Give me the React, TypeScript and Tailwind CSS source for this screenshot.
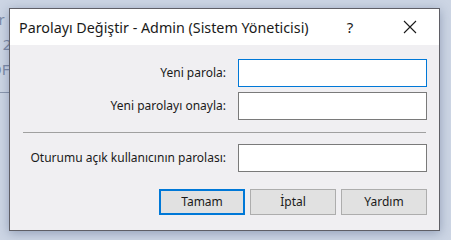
const ui = { fontFamily: '"Segoe UI", "Noto Sans", "Open Sans", sans-serif' };

function Field({ label, focused }: { label: string; focused?: boolean }) {
  return (
    <div className="flex items-center justify-end gap-[12px]">
      <span className="text-[12px] text-[#1a1a1a]">{label}</span>
      <div
        className={
          "h-[28px] w-[189px] bg-white border " +
          (focused ? "border-[#0078d7]" : "border-[#7a7a7a]")
        }
      />
    </div>
  );
}

function Btn({ label, primary }: { label: string; primary?: boolean }) {
  return (
    <button
      className={
        "h-[26px] w-[86px] bg-[#e1e1e1] text-[12px] text-[#1a1a1a] " +
        (primary ? "border-2 border-[#0078d7]" : "border border-[#adadad]")
      }
    >
      {label}
    </button>
  );
}

export default function App() {
  return (
    <div className="w-[451px] h-[240px] overflow-hidden bg-[#ccd5e4] flex" style={ui}>
      <div className="w-[9px] shrink-0 overflow-hidden text-[#7c8aa6] text-[15px] leading-none">
        <div className="-ml-[10px] pt-[12px] whitespace-nowrap">ar</div>
        <div className="-ml-[6px] pt-[10px] whitespace-nowrap">- 2</div>
        <div className="-ml-[10px] pt-[10px] whitespace-nowrap">OF</div>
        <div className="mt-[15px] border-t border-[#8a97ad]" />
      </div>
      <div className="mt-[8px] w-[431px] h-[223px] shrink-0 flex flex-col border border-[#5f5f66] bg-[#f0eff2] shadow-[0_2px_10px_rgba(40,60,100,0.35)]">
        <div className="h-[36px] bg-white flex items-center pl-[9px]">
          <span className="text-[14.3px] text-[#1a1a1a] flex-1 pt-[1px]">
            Parolayı Değiştir - Admin (Sistem Yöneticisi)
          </span>
          <span className="w-[58px] text-center text-[15px] text-[#1a1a1a] pr-[4px]">?</span>
          <span className="w-[58px] flex justify-center">
            <svg width="14" height="14" viewBox="0 0 14 14" stroke="#1a1a1a" strokeWidth="1.1">
              <path d="M1 1L13 13M13 1L1 13" />
            </svg>
          </span>
        </div>
        <div className="flex flex-col pt-[14px] pl-[13px] pr-[12px]">
          <Field label="Yeni parola:" focused />
          <div className="h-[5px]" />
          <Field label="Yeni parolayı onayla:" />
          <div className="mt-[12px] mr-px border-t border-[#a0a0a0]" />
          <div className="h-[11px]" />
          <Field label="Oturumu açık kullanıcının parolası:" />
          <div className="flex justify-end gap-[5px] mt-[17px]">
            <Btn label="Tamam" primary />
            <Btn label="İptal" />
            <Btn label="Yardım" />
          </div>
        </div>
      </div>
    </div>
  );
}
